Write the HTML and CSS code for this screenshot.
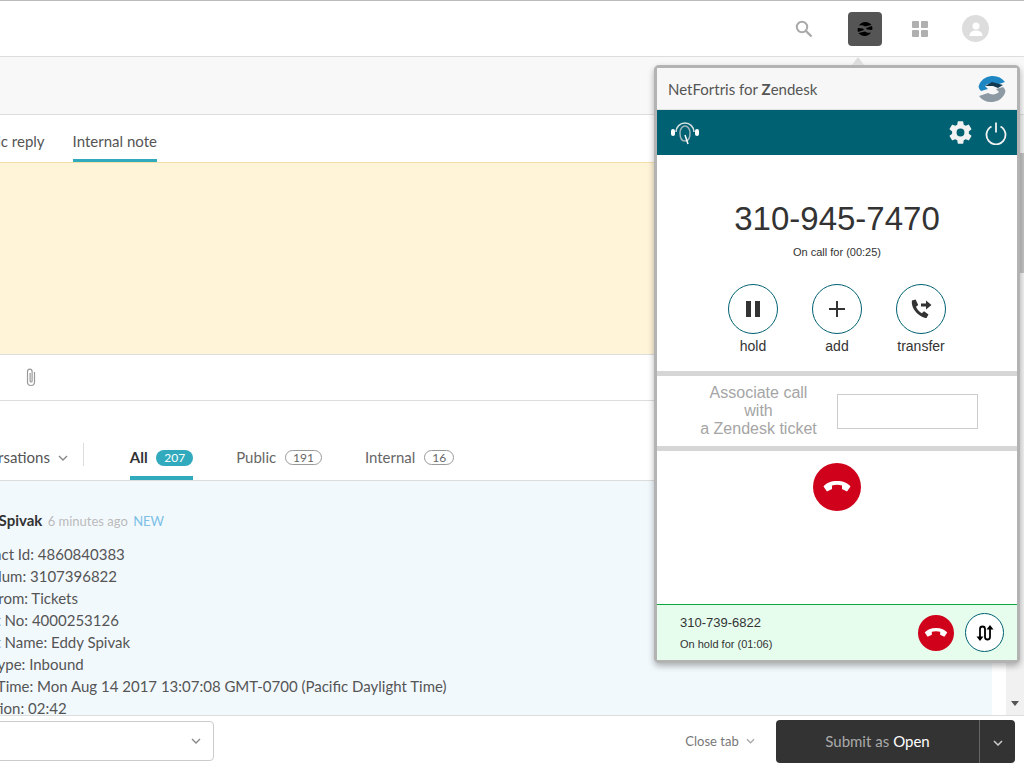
FILE: index.html

```html
<!DOCTYPE html>
<html lang="en">
<head>
  <meta charset="UTF-8">
  <title>NetFortris for Zendesk</title>
  <link rel="stylesheet" href="styles.css">
</head>
<body>
  <div class="page">
    <header class="topbar">
      <svg class="search-icon" width="18" height="18" viewBox="0 0 18 18"><circle cx="7" cy="7" r="5.2" fill="none" stroke="#aaa" stroke-width="2"/><path d="M11 11l5.5 5.5" stroke="#aaa" stroke-width="2.4"/></svg>
      <div class="app-btn">
        <svg width="18" height="18" viewBox="0 0 18 18"><path d="M3 5.5A7.5 7.5 0 0 1 15.5 5L9 6.5C7 5 5 5 3 5.5zM15 12.5A7.5 7.5 0 0 1 2.5 13L9 11.5c2 1.5 4 1.5 6 1z" fill="#000"/><path d="M1.8 8A7 7 0 0 0 2 12l6-2-1-1.500zM16.200 10a7 7 0 0 0-.2-4l-6 2 1 1.500z" fill="#000"/></svg>
      </div>
      <div class="apps-icon"><i></i><i></i><i></i><i></i></div>
      <div class="avatar">
        <svg width="16" height="16" viewBox="0 0 16 16"><circle cx="8" cy="5" r="3.500" fill="#fff"/><path d="M1.500 15c0-4 3-5.500 6.500-5.500s6.500 1.500 6.500 5.500z" fill="#fff"/></svg>
      </div>
    </header>
    <div class="subbar"></div>

    <div class="main">
      <div class="reply-tabs">
        <span class="reply-tab first">Public reply</span>
        <span class="reply-tab active">Internal note</span>
      </div>
      <div class="note"></div>
      <div class="attach-row">
        <svg width="14" height="20" viewBox="0 0 14 20"><path d="M10.500 5v10a3.500 3.500 0 0 1-7 0V4.500a2.300 2.300 0 0 1 4.600 0V14a1 1 0 0 1-2 0V6" fill="none" stroke="#999" stroke-width="1.200"/></svg>
      </div>
      <div class="conv-tabs">
        <span class="conv-select">Conversations <svg class="chev" width="10" height="6" viewBox="0 0 10 6"><path d="M1 1l4 4 4-4" fill="none" stroke="#888" stroke-width="1.400"/></svg></span>
        <span class="conv-sep"></span>
        <span class="conv-tab active">All <b class="pill fill">207</b></span>
        <span class="conv-tab">Public <b class="pill">191</b></span>
        <span class="conv-tab">Internal <b class="pill">16</b></span>
      </div>
      <div class="message">
        <div class="msg-head"><strong>Eddy Spivak</strong> <span class="ago">6 minutes ago</span> <span class="new">NEW</span></div>
        <p>Contact Id: 4860840383</p>
        <p>Call Num: 3107396822</p>
        <p>Call From: Tickets</p>
        <p>Client No: 4000253126</p>
        <p>Client Name: Eddy Spivak</p>
        <p>Call Type: Inbound</p>
        <p>Start Time: Mon Aug 14 2017 13:07:08 GMT-0700 (Pacific Daylight Time)</p>
        <p>Duration: 02:42</p>
      </div>
    </div>

    <div class="scrollbar">
      <span class="scroll-thumb"></span>
      <span class="scroll-down"></span>
    </div>

    <footer class="footer">
      <div class="macro">
        <svg class="chev" width="10" height="6" viewBox="0 0 10 6"><path d="M1 1l4 4 4-4" fill="none" stroke="#888" stroke-width="1.400"/></svg>
      </div>
      <span class="close-tab">Close tab <svg class="chev" width="9" height="6" viewBox="0 0 10 6"><path d="M1 1l4 4 4-4" fill="none" stroke="#aaa" stroke-width="1.400"/></svg></span>
      <div class="submit">
        <span class="submit-main">Submit as <b>Open</b></span>
        <span class="submit-more"><svg width="10" height="6" viewBox="0 0 10 6"><path d="M1 1l4 4 4-4" fill="none" stroke="#ccc" stroke-width="1.500"/></svg></span>
      </div>
    </footer>

    <!-- softphone popover, sits over the ticket -->
    <section class="phone">
      <span class="phone-arrow"></span>
      <div class="phone-title">
        <span>NetFortris for <b>Z</b>endesk</span>
        <svg width="30" height="28" viewBox="0 0 30 28">
          <path d="M2 10C5 3 11 1 16 1c5 0 9 2 12 6l-9 3c-3-2-8-2-11 1l3 3-7 2C2 14 1 12 2 10z" fill="#1f86c4"/>
          <path d="M28 18c-3 7-9 9-14 9-5 0-9-2-12-6l9-3c3 2 8 2 11-1l-3-3 7-2c2 2 3 4 2 6z" fill="#8d9aa3"/>
          <path d="M8 11l7-4 11 3-5 3-5-2z" fill="#12394f"/>
        </svg>
      </div>
      <div class="phone-nav">
        <svg class="agent-icon" width="30" height="28" viewBox="0 0 30 28">
          <path d="M6 13A9 9 0 0 1 24 13" fill="none" stroke="#d5dfe2" stroke-width="1.500"/>
          <path d="M10 14a5 7 0 0 1 10 0c0 5-2 8-5 8s-5-3-5-8z" fill="none" stroke="#9fb4ba" stroke-width="1.500"/>
          <path d="M15 16l3 9" stroke="#fff" stroke-width="1.500"/>
          <rect x="1" y="10" width="4" height="7" rx="2" fill="#fff"/>
          <rect x="25" y="10" width="4" height="7" rx="2" fill="#fff"/>
        </svg>
        <svg class="gear-icon" width="24" height="24" viewBox="0 0 24 24"><path fill="#f2f2f2" d="M19.400 13c.04-.33.06-.66.06-1s-.02-.67-.06-1l2.100-1.650c.2-.15.25-.42.12-.64l-2-3.460c-.12-.22-.39-.3-.61-.22l-2.490 1c-.52-.4-1.080-.73-1.690-.98l-.38-2.650A.49.49 0 0 0 14 2h-4c-.25 0-.46.18-.49.42l-.38 2.650c-.61.25-1.170.59-1.690.98l-2.490-1c-.23-.09-.49 0-.61.22l-2 3.460c-.13.22-.07.49.12.64L4.570 11c-.04.33-.07.67-.07 1s.03.67.07 1l-2.110 1.650c-.19.15-.25.42-.12.64l2 3.460c.12.22.39.3.61.22l2.490-1c.52.4 1.080.73 1.690.98l.38 2.650c.03.24.24.42.49.42h4c.25 0 .46-.18.49-.42l.38-2.650c.61-.25 1.170-.59 1.690-.98l2.490 1c.23.09.49 0 .61-.22l2-3.460c.12-.22.07-.49-.12-.64L19.400 13zM12 15.500a3.500 3.500 0 1 1 0-7 3.500 3.500 0 0 1 0 7z"/></svg>
        <svg class="power-icon" width="24" height="24" viewBox="0 0 24 24"><path d="M7.500 5.500a9.500 9.500 0 1 0 9 0" fill="none" stroke="#f2f2f2" stroke-width="1.800"/><path d="M12 1.500v10" stroke="#f2f2f2" stroke-width="1.800"/></svg>
      </div>

      <div class="call-panel">
        <div class="call-number">310-945-7470</div>
        <div class="call-time">On call for (00:25)</div>
        <div class="call-actions">
          <div class="action">
            <span class="round-btn"><svg width="16" height="16" viewBox="0 0 16 16"><rect x="1" y="0" width="5" height="16" fill="#333"/><rect x="10" y="0" width="5" height="16" fill="#333"/></svg></span>
            hold
          </div>
          <div class="action">
            <span class="round-btn"><svg width="18" height="18" viewBox="0 0 18 18"><path d="M9 1v16M1 9h16" stroke="#333" stroke-width="2"/></svg></span>
            add
          </div>
          <div class="action">
            <span class="round-btn"><svg width="24" height="24" viewBox="0 0 24 24"><path fill="#333" d="M6.600 2.500 3 3.500c-.6 2.500.2 7 3.500 11s8 6.500 11 6.500l2-3.500-4.500-3.200-2.200 2c-2.500-1.300-4.700-3.800-5.800-6.500l2.200-1.800z"/><path fill="#333" d="M12 6.500h5V3.500l5.500 4.500-5.500 4.500v-3h-5z"/></svg></span>
            transfer
          </div>
        </div>
      </div>

      <div class="associate">
        <label class="associate-label" for="ticket">Associate call with<br>a Zendesk ticket</label>
        <input class="ticket-input" id="ticket" type="text">
      </div>

      <div class="hangup-panel">
        <span class="hangup big">
          <svg width="28" height="12" viewBox="0 0 28 12"><path fill="#fff" d="M14 0C8 0 3 2 .5 5.500L4 10.500l5-2.500V4.500c3-1 7-1 10 0V8l5 2.500 3.500-5C25 2 20 0 14 0z"/></svg>
        </span>
      </div>

      <div class="held-call">
        <div class="held-info">
          <div class="held-number">310-739-6822</div>
          <div class="held-time">On hold for (01:06)</div>
        </div>
        <span class="hangup small">
          <svg width="28" height="12" viewBox="0 0 28 12"><path fill="#fff" d="M14 0C8 0 3 2 .5 5.500L4 10.500l5-2.500V4.500c3-1 7-1 10 0V8l5 2.500 3.500-5C25 2 20 0 14 0z"/></svg>
        </span>
        <span class="swap-btn">
          <svg width="20" height="20" viewBox="0 0 20 20"><path d="M5 16V6a2.500 2.500 0 0 1 5 0v8a2.500 2.500 0 0 0 5 0V4" fill="none" stroke="#000" stroke-width="1.800"/><path d="M1.500 13.500h7L5 18zM11.500 6.500h7L15 2z" fill="#000"/></svg>
        </span>
      </div>
    </section>
  </div>
</body>
</html>
```

FILE: styles.css

```css
* {
  box-sizing: border-box;
}
html, body {
  margin: 0;
  height: 100%;
  overflow: hidden;
}
body {
  font-family: Lato, "Noto Sans", sans-serif;
  color: #555;
  background: #fff;
}
.page {
  position: relative;
  width: 1024px;
  height: 768px;
  overflow: hidden;
  display: grid;
  grid-template-columns: 1006px 18px;
  grid-template-rows: 57px 58px 1fr 53px;
}

/* top bars */
.topbar {
  grid-column: 1 / 3;
  display: flex;
  align-items: center;
  justify-content: flex-end;
  padding-right: 35px;
  border-top: 1px solid #bbb;
  border-bottom: 1px solid #ddd;
}
.search-icon {
  margin-right: 35px;
}
.app-btn {
  width: 34px;
  height: 34px;
  margin-right: 30px;
  border-radius: 4px;
  background: #555;
  display: flex;
  align-items: center;
  justify-content: center;
}
.apps-icon {
  display: grid;
  grid-template-columns: 7px 7px;
  gap: 2px;
  margin-right: 34px;
}
.apps-icon i {
  width: 7px;
  height: 7px;
  background: #b0b0b0;
  border-radius: 1px;
}
.avatar {
  width: 27px;
  height: 27px;
  border-radius: 50%;
  background: #ddd;
  display: flex;
  align-items: center;
  justify-content: center;
}
.subbar {
  grid-column: 1 / 3;
  background: #f8f8f8;
  border-bottom: 1px solid #ddd;
}

/* ticket column */
.main {
  min-width: 0;
  overflow: hidden;
  display: flex;
  flex-direction: column;
}
.reply-tabs {
  height: 47px;
  flex: none;
  display: flex;
  align-items: flex-end;
  gap: 28px;
  margin-left: -32px;
  font-size: 15px;
}
.reply-tab {
  height: 35px;
  padding-top: 5px;
  white-space: nowrap;
}
.reply-tab.active {
  border-bottom: 3px solid #30aabc;
}
.note {
  height: 193px;
  flex: none;
  margin-right: -18px;
  background: #fff4d8;
  border-top: 1px solid #f3dfa8;
  border-bottom: 1px solid #ddd;
}
.attach-row {
  height: 46px;
  flex: none;
  padding: 12px 0 0 24px;
  border-bottom: 1px solid #ddd;
  margin-right: -18px;
}
.conv-tabs {
  height: 80px;
  flex: none;
  display: flex;
  align-items: flex-end;
  margin-left: -44px;
  font-size: 15px;
  border-bottom: 1px solid #ddd;
}
.conv-select {
  height: 37px;
  padding-top: 5px;
  white-space: nowrap;
}
.chev {
  margin-left: 4px;
  vertical-align: 2px;
}
.conv-sep {
  width: 1px;
  height: 23px;
  margin: 0 46px 14px 15px;
  background: #ddd;
}
.conv-tab {
  height: 37px;
  padding-top: 5px;
  margin-right: 43px;
  white-space: nowrap;
  color: #666;
}
.conv-tab.active {
  margin-right: 43px;
  color: #333;
  border-bottom: 4px solid #30aabc;
  font-weight: 700;
}
.pill {
  display: inline-block;
  margin-left: 5px;
  padding: 0 7px;
  height: 15px;
  line-height: 13px;
  border: 1px solid #999;
  border-radius: 8px;
  font-size: 12px;
  font-weight: 400;
  vertical-align: 1px;
}
.pill.fill {
  height: 16px;
  padding: 0 8px;
  line-height: 16px;
  border: none;
  background: #30aabc;
  color: #fff;
}
.message {
  flex: 1;
  min-height: 0;
  margin-right: 14px;
  padding: 30px 0 0;
  background: #f2f9fd;
  overflow: hidden;
  font-size: 15px;
  line-height: 22px;
  text-indent: 0;
  margin-left: -38px;
}
.message p {
  margin: 0;
  white-space: nowrap;
}
.msg-head {
  margin: -1px 0 12px;
  line-height: 20px;
  font-size: 13px;
  white-space: nowrap;
}
.msg-head strong {
  font-size: 15px;
  color: #333;
}
.ago {
  margin-left: 2px;
  color: #bbb;
}
.new {
  margin-left: 2px;
  color: #7cc0e6;
}

/* page scrollbar */
.scrollbar {
  position: relative;
  background: #f1f1f1;
}
.scroll-thumb {
  display: block;
  height: 120px;
  margin-top: 38px;
  background: #c1c1c1;
}
.scroll-down {
  position: absolute;
  left: 5px;
  bottom: 9px;
  border: 4px solid transparent;
  border-top: 5px solid #555;
  border-bottom: 0;
}

/* bottom bar */
.footer {
  grid-column: 1 / 3;
  display: flex;
  align-items: center;
  padding: 0 9px 2px 0;
  border-top: 1px solid #ddd;
}
.macro {
  width: 215px;
  height: 40px;
  margin-left: -1px;
  padding-right: 12px;
  display: flex;
  align-items: center;
  justify-content: flex-end;
  border: 1px solid #ccc;
  border-radius: 0 4px 4px 0;
}
.close-tab {
  margin-left: auto;
  margin-right: 21px;
  font-size: 13px;
  color: #777;
}
.submit {
  width: 239px;
  height: 43px;
  display: flex;
  background: #333;
  border-radius: 4px;
  color: #aaa;
  font-size: 15px;
}
.submit-main {
  flex: 1;
  display: flex;
  align-items: center;
  justify-content: center;
  gap: 4px;
  border-right: 1px solid #666;
}
.submit-main b {
  color: #fff;
  font-weight: 400;
}
.submit-more {
  width: 35px;
  padding-top: 11px;
  text-align: center;
}

/* softphone popover */
.phone {
  position: absolute;
  left: 654px;
  top: 65px;
  width: 366px;
  height: 598px;
  display: flex;
  flex-direction: column;
  background: #fff;
  border: 3px solid #b3b3b3;
  border-radius: 5px;
  box-shadow: 0 3px 6px rgba(0, 0, 0, 0.3);
  font-family: "Liberation Sans", Arial, sans-serif;
}
.phone-arrow {
  position: absolute;
  right: 153px;
  top: -11px;
  border: 6px solid transparent;
  border-top: 0;
  border-bottom: 6px solid #ddd;
  border-bottom-width: 8px;
}
.phone-title {
  height: 42px;
  flex: none;
  display: flex;
  align-items: center;
  justify-content: space-between;
  padding: 0 0 0 11px;
  background: #f7f7f7;
  border-bottom: 1px solid #e4e4e4;
  font-family: Lato, sans-serif;
  font-size: 15px;
  color: #555;
}
.phone-title svg {
  margin-right: 10px;
}
.phone-nav {
  height: 45px;
  flex: none;
  display: flex;
  align-items: center;
  padding: 0 9px 0 13px;
  background: #006172;
}
.agent-icon {
  margin-right: auto;
}
.gear-icon {
  margin-right: 10px;
  width: 27px;
  height: 27px;
}
.call-panel {
  height: 221px;
  flex: none;
  padding-top: 44px;
  text-align: center;
  color: #333;
  border-bottom: 5px solid #d6d6d6;
}
.call-number {
  font-size: 33px;
  line-height: 40px;
}
.call-time {
  margin-top: 7px;
  font-size: 11px;
  line-height: 13px;
}
.call-actions {
  display: flex;
  justify-content: center;
  gap: 32px;
  margin-top: 25px;
  padding-left: 0;
}
.action {
  width: 52px;
  display: flex;
  flex-direction: column;
  align-items: center;
  font-size: 14px;
  line-height: 16px;
}
.round-btn {
  width: 50px;
  height: 50px;
  margin-bottom: 4px;
  flex: none;
  display: flex;
  align-items: center;
  justify-content: center;
  border: 1px solid #006172;
  border-radius: 50%;
}
.associate {
  height: 75px;
  flex: none;
  display: flex;
  align-items: center;
  padding: 0 39px 0 37px;
  border-bottom: 5px solid #d6d6d6;
}
.associate-label {
  width: 129px;
  flex: none;
  text-align: center;
  font-size: 16px;
  line-height: 18px;
  color: #a5a5a5;
}
.ticket-input {
  width: 141px;
  height: 35px;
  margin-left: 14px;
  border: 1px solid #ccc;
  background: #fff;
}
.hangup-panel {
  flex: 1;
  padding-top: 12px;
  text-align: center;
  border-bottom: 1px solid #0aa83c;
}
.hangup {
  display: inline-flex;
  align-items: center;
  justify-content: center;
  border-radius: 50%;
  background: #d0021b;
}
.hangup.big {
  width: 48px;
  height: 48px;
}
.hangup.small {
  width: 36px;
  height: 36px;
  flex: none;
  margin-right: 11px;
}
.hangup.small svg {
  width: 24px;
  height: 10px;
}
.held-call {
  height: 55px;
  flex: none;
  display: flex;
  align-items: center;
  padding: 0 13px 0 23px;
  background: #e6fdee;
  color: #333;
}
.held-info {
  flex: 1;
}
.held-number {
  font-size: 13px;
  line-height: 16px;
}
.held-time {
  margin-top: 7px;
  font-size: 11px;
  line-height: 13px;
}
.swap-btn {
  width: 39px;
  height: 39px;
  flex: none;
  display: flex;
  align-items: center;
  justify-content: center;
  border: 1px solid #006172;
  border-radius: 50%;
  background: #fff;
}
```
